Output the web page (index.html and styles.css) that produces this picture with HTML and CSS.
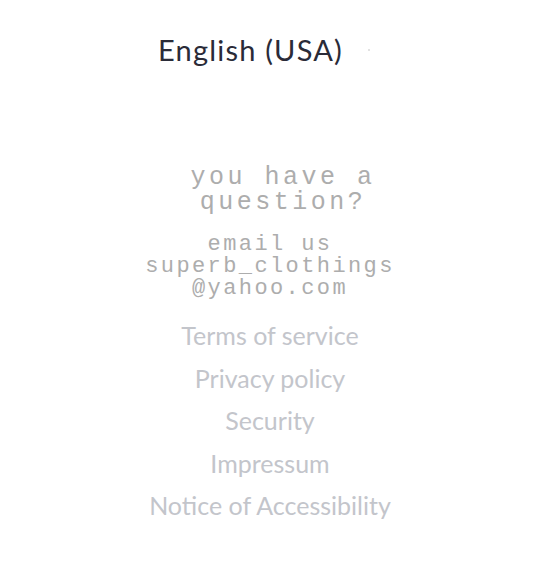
FILE: index.html
```html
<!DOCTYPE html>
<html>
<head>
<meta charset="utf-8">
<link rel="stylesheet" href="styles.css">
</head>
<body>
<div class="page">
  <div class="lang">
    <span class="lang-name">English (USA)</span>
    <span class="lang-mark"></span>
  </div>
  <div class="contact">
    <p class="question">you have a<br>question?</p>
    <p class="email">email us<br>superb_clothings<br>@yahoo.com</p>
  </div>
  <ul class="links">
    <li>Terms of service</li>
    <li>Privacy policy</li>
    <li>Security</li>
    <li>Impressum</li>
    <li>Notice of Accessibility</li>
  </ul>
</div>
</body>
</html>
```

FILE: styles.css
```css
html, body {
  margin: 0;
  padding: 0;
  background: #ffffff;
}
.page {
  width: 540px;
  display: flex;
  flex-direction: column;
  align-items: center;
}
.lang {
  margin-top: 33px;
  display: flex;
  align-items: center;
  gap: 25px;
  padding-right: 12px;
}
.lang-name {
  font-family: Lato, sans-serif;
  font-size: 29px;
  letter-spacing: 1.2px;
  line-height: 34px;
  color: #2a2b38;
}
.lang-mark {
  width: 2px;
  height: 2px;
  background: #d8d8d8;
  border-radius: 50%;
}
.contact {
  margin-top: 98px;
  display: flex;
  flex-direction: column;
  align-items: center;
  font-family: "Liberation Mono", "Courier New", monospace;
  color: #adadad;
}
.question {
  margin: 0;
  padding-left: 26px;
  font-size: 25px;
  letter-spacing: 3.5px;
  line-height: 25px;
  text-align: center;
}
.email {
  margin: 19px 0 0;
  font-size: 22px;
  letter-spacing: 2.4px;
  line-height: 22px;
  text-align: center;
}
.links {
  list-style: none;
  margin: 14px 0 0;
  padding: 0;
  display: flex;
  flex-direction: column;
  align-items: center;
  font-family: Lato, sans-serif;
  font-size: 25px;
  line-height: 42.5px;
  color: #c3c5cb;
}
```
